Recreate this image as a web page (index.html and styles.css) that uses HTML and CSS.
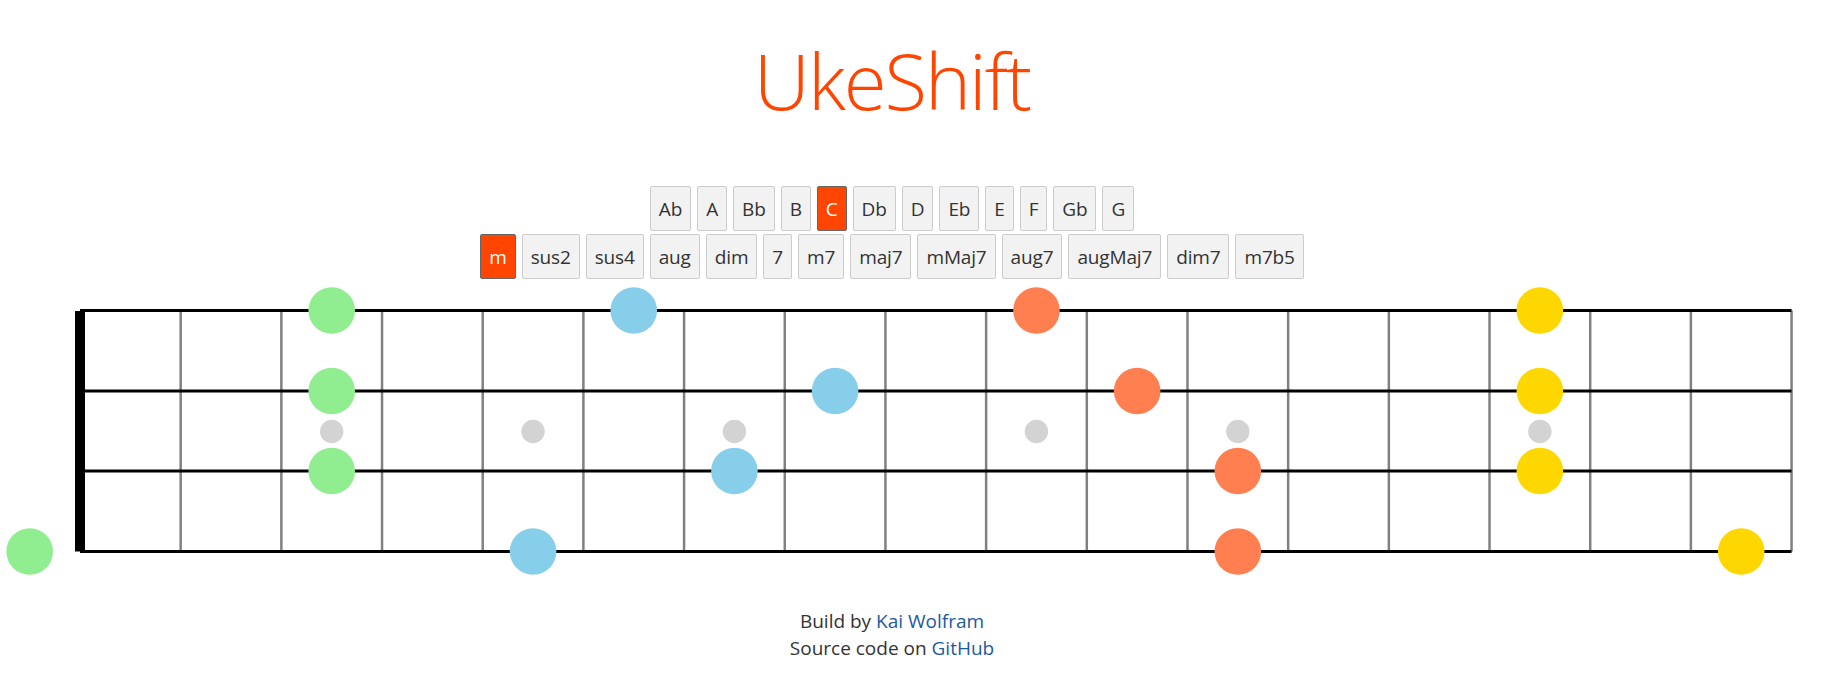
FILE: index.html
```html
<!DOCTYPE html>
<html lang="en">
<head>
<meta charset="utf-8">
<title>UkeShift</title>
<link rel="stylesheet" href="styles.css">
</head>
<body>
<header class="centered">
  <h1 class="title">UkeShift</h1>
</header>
<nav class="centered controls">
  <div class="btn-row">
    <button class="btn">Ab</button>
    <button class="btn">A</button>
    <button class="btn">Bb</button>
    <button class="btn">B</button>
    <button class="btn active">C</button>
    <button class="btn">Db</button>
    <button class="btn">D</button>
    <button class="btn">Eb</button>
    <button class="btn">E</button>
    <button class="btn">F</button>
    <button class="btn">Gb</button>
    <button class="btn">G</button>
  </div>
  <div class="btn-row">
    <button class="btn active">m</button>
    <button class="btn">sus2</button>
    <button class="btn">sus4</button>
    <button class="btn">aug</button>
    <button class="btn">dim</button>
    <button class="btn">7</button>
    <button class="btn">m7</button>
    <button class="btn">maj7</button>
    <button class="btn">mMaj7</button>
    <button class="btn">aug7</button>
    <button class="btn">augMaj7</button>
    <button class="btn">dim7</button>
    <button class="btn">m7b5</button>
  </div>
</nav>
<svg class="fretboard" width="1824" height="300" viewBox="0 0 1824 300" xmlns="http://www.w3.org/2000/svg">
  <g class="frets" stroke="#808080" stroke-width="2.5">
    <line x1="180.68" y1="30.5" x2="180.68" y2="271.5"/>
    <line x1="281.36" y1="30.5" x2="281.36" y2="271.5"/>
    <line x1="382.04" y1="30.5" x2="382.04" y2="271.5"/>
    <line x1="482.72" y1="30.5" x2="482.72" y2="271.5"/>
    <line x1="583.4" y1="30.5" x2="583.4" y2="271.5"/>
    <line x1="684.08" y1="30.5" x2="684.08" y2="271.5"/>
    <line x1="784.76" y1="30.5" x2="784.76" y2="271.5"/>
    <line x1="885.44" y1="30.5" x2="885.44" y2="271.5"/>
    <line x1="986.12" y1="30.5" x2="986.12" y2="271.5"/>
    <line x1="1086.8" y1="30.5" x2="1086.8" y2="271.5"/>
    <line x1="1187.48" y1="30.5" x2="1187.48" y2="271.5"/>
    <line x1="1288.16" y1="30.5" x2="1288.16" y2="271.5"/>
    <line x1="1388.84" y1="30.5" x2="1388.84" y2="271.5"/>
    <line x1="1489.52" y1="30.5" x2="1489.52" y2="271.5"/>
    <line x1="1590.2" y1="30.5" x2="1590.2" y2="271.5"/>
    <line x1="1690.88" y1="30.5" x2="1690.88" y2="271.5"/>
    <line x1="1791.56" y1="30.5" x2="1791.56" y2="271.5"/>
  </g>
  <g class="strings" stroke="#000" stroke-width="3">
    <line x1="80" y1="30.5" x2="1791.5" y2="30.5"/>
    <line x1="80" y1="111" x2="1791.5" y2="111"/>
    <line x1="80" y1="191" x2="1791.5" y2="191"/>
    <line x1="80" y1="271.5" x2="1791.5" y2="271.5"/>
  </g>
  <line x1="80" y1="31" x2="80" y2="271.5" stroke="#000" stroke-width="10"/>
  <g class="inlays" fill="#d3d3d3">
    <circle cx="331.7" cy="151.5" r="11.7"/>
    <circle cx="533.06" cy="151.5" r="11.7"/>
    <circle cx="734.42" cy="151.5" r="11.7"/>
    <circle cx="1036.46" cy="151.5" r="11.7"/>
    <circle cx="1237.82" cy="151.5" r="11.7"/>
    <circle cx="1539.86" cy="151.5" r="11.7"/>
  </g>
  <g fill="#90ee90">
    <circle cx="331.7" cy="30.5" r="23.3"/>
    <circle cx="331.7" cy="111" r="23.3"/>
    <circle cx="331.7" cy="191" r="23.3"/>
    <circle cx="29.66" cy="271.5" r="23.3"/>
  </g>
  <g fill="#87ceeb">
    <circle cx="633.74" cy="30.5" r="23.3"/>
    <circle cx="835.1" cy="111" r="23.3"/>
    <circle cx="734.42" cy="191" r="23.3"/>
    <circle cx="533.06" cy="271.5" r="23.3"/>
  </g>
  <g fill="#ff7f50">
    <circle cx="1036.46" cy="30.5" r="23.3"/>
    <circle cx="1137.14" cy="111" r="23.3"/>
    <circle cx="1237.82" cy="191" r="23.3"/>
    <circle cx="1237.82" cy="271.5" r="23.3"/>
  </g>
  <g fill="#ffd700">
    <circle cx="1539.86" cy="30.5" r="23.3"/>
    <circle cx="1539.86" cy="111" r="23.3"/>
    <circle cx="1539.86" cy="191" r="23.3"/>
    <circle cx="1741.22" cy="271.5" r="23.3"/>
  </g>
</svg>
<footer class="centered footer">
  <div>Build by <a href="#">Kai Wolfram</a></div>
  <div>Source code on <a href="#">GitHub</a></div>
</footer>
</body>
</html>
```
FILE: styles.css
```css
html, body {
  margin: 0;
  padding: 0;
  background: #fff;
}
body {
  font-family: "Open Sans", "Noto Sans", sans-serif;
  color: #333;
}
.centered {
  width: 1784px;
  text-align: center;
}
.title {
  margin: 0;
  padding-top: 32px;
  font-size: 78px;
  line-height: 96px;
  font-weight: 300;
  letter-spacing: -2px;
  color: #ff4500;
}
.controls {
  margin-top: 58px;
  display: flex;
  flex-direction: column;
  gap: 3px;
}
.btn-row {
  display: flex;
  justify-content: center;
  gap: 6px;
}
.btn {
  font-family: inherit;
  font-size: 19px;
  letter-spacing: -0.15px;
  line-height: 30px;
  padding: 7px 8px 6px;
  margin: 0;
  height: 45px;
  color: #333;
  background: #f2f2f2;
  border: 1px solid #ccc;
  border-radius: 2px;
  cursor: pointer;
}
.btn.active {
  background: #ff4500;
  color: #fff;
  border-color: #666;
}
.fretboard {
  display: block;
  margin-top: 1px;
}
.footer {
  margin-top: 28px;
  font-size: 19px;
  line-height: 27px;
}
.footer a {
  color: #1c5aa0;
  text-decoration: none;
}
```
